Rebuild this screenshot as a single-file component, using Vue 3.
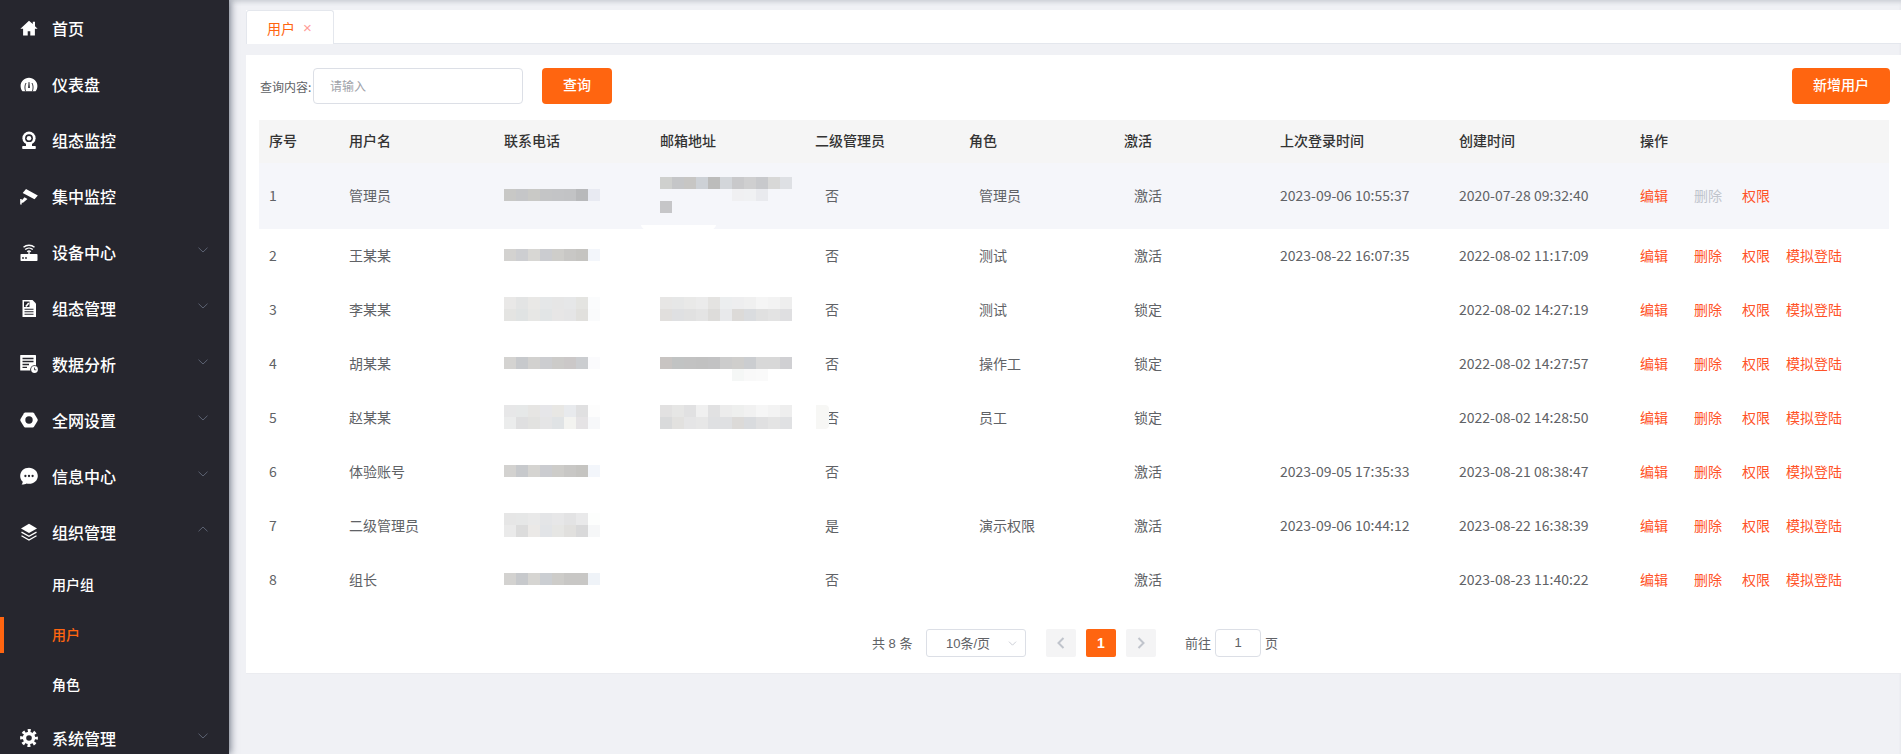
<script setup>
const D = '#26262e'
const menuItems = [
  { label: '首页', icon: `<path d="M9 1.800 .4 9.700h2.700v6.800h4.600v-4.300h2.600v4.300h4.600V9.700h2.700L15 7.200V2.800h-2.200v2.300z" fill="#fff"/>` },
  { label: '仪表盘', icon: `<path d="M9 2.700C4.300 2.700.6 6.400.6 10.900c0 2.100.7 3.800 1.900 5.300h13c1.200-1.500 1.900-3.200 1.900-5.300 0-4.500-3.700-8.200-8.400-8.200z" fill="#fff"/><path d="M5.600 16.300c-1-3-.9-5.800.4-8.300M12.400 16.300c1-3 .9-5.800-.4-8.300" stroke="${D}" stroke-width=".9" fill="none"/><path d="M8.600 7h.8l.5 6H8.100z" fill="${D}"/>` },
  { label: '组态监控', icon: `<circle cx="9" cy="7.200" r="6.600" fill="#fff"/><circle cx="9" cy="7.200" r="3.900" fill="${D}"/><circle cx="9" cy="7.200" r="2.300" fill="#fff"/><path d="M6 13h6v2.500H6z" fill="#fff"/><rect x="2.200" y="15" width="13.600" height="3" rx=".8" fill="#fff"/>` },
  { label: '集中监控', icon: `<path d="M6 2l11.800 6.500-3.300 3.700L2.700 6z" fill="#fff"/><path d="M.2 17.500V12h1.500v1.500l2.800-3.200 3 1.800-4.500 3.700H1.700v1.700z" fill="#fff"/>` },
  { label: '设备中心', arrow: 'down', icon: `<rect x=".5" y="11" width="17" height="7" rx=".8" fill="#fff"/><circle cx="3" cy="15" r=".9" fill="${D}"/><circle cx="6" cy="15" r=".9" fill="${D}"/><path d="M7.200 8.800a2.700 2.700 0 0 1 3.600 0M5.200 6.600a5.600 5.600 0 0 1 7.600 0M3.500 4.300a8.200 8.200 0 0 1 11 0" stroke="#fff" stroke-width="1.400" fill="none"/><path d="M8.300 8.800h1.400V11H8.300z" fill="#fff"/>` },
  { label: '组态管理', arrow: 'down', icon: `<path d="M2.500 1h10l3.500 3.500V18H2.500z" fill="#fff"/><path d="M4 2.500h5.500V8H4z" fill="${D}"/><path d="M5.200 7l3-3.500 1.300 1-3 3.400z" fill="#fff"/><path d="M4.500 10.200h9M4.500 12.700h9M4.500 15.200h9" stroke="${D}" stroke-width="1.100"/>` },
  { label: '数据分析', arrow: 'down', icon: `<rect x=".2" y="0" width="15.800" height="15.500" rx=".6" fill="#fff"/><path d="M2.500 3.500h11M2.500 6.500h11M2.500 9.500h6.500M2.500 12.400h4.500" stroke="${D}" stroke-width="1.400"/><circle cx="14.500" cy="14.500" r="4.300" fill="${D}"/><circle cx="14.500" cy="14.500" r="3.400" fill="#fff"/><path d="M14.500 12.600v2.200h1.800" stroke="${D}" stroke-width=".8" fill="none"/>` },
  { label: '全网设置', arrow: 'down', icon: `<path d="M5.200 1.500h7.600c.5 0 .9.300 1.200.7l3.500 5.900c.3.600.3 1.200 0 1.800L14 15.800c-.3.400-.7.700-1.200.7H5.200c-.5 0-.9-.3-1.200-.7L.5 9.900c-.3-.6-.3-1.200 0-1.800L4 2.200c.3-.4.700-.7 1.200-.7z" fill="#fff"/><circle cx="9" cy="9" r="3.700" fill="${D}"/>` },
  { label: '信息中心', arrow: 'down', icon: `<path d="M9 .8C4 .8.2 4.300.2 8.900c0 2.400 1 4.400 2.600 5.800-.1 1.100-.8 2.300-1.200 2.900 1.600.1 3.800-.5 5-1.100.8.200 1.500.3 2.400.3 5 0 8.800-3.500 8.800-7.900S14 .8 9 .8z" fill="#fff"/><circle cx="5.400" cy="9" r="1.150" fill="${D}"/><circle cx="9" cy="9" r="1.150" fill="${D}"/><circle cx="12.600" cy="9" r="1.150" fill="${D}"/>` },
  { label: '组织管理', arrow: 'up', icon: `<path d="M9 .8l8 4.600-8 4.600-8-4.600z" fill="#fff"/><path d="M1.500 9.100 9 13.300l7.500-4.200M1.500 12.800 9 17l7.500-4.200" stroke="#fff" stroke-width="1.300" fill="none"/>` },
  { label: '用户组', sub: true },
  { label: '用户', sub: true, active: true },
  { label: '角色', sub: true },
  { label: '系统管理', arrow: 'down', icon: `<circle cx="9" cy="9" r="7.200" fill="none" stroke="#fff" stroke-width="3.400" stroke-dasharray="2.900 2.755" stroke-dashoffset="1.450"/><circle cx="9" cy="9" r="6.200" fill="#fff"/><circle cx="9" cy="9" r="2.800" fill="${D}"/>` },
]

const columns = [
  { title: '序号', width: 80 }, { title: '用户名', width: 155 }, { title: '联系电话', width: 156 },
  { title: '邮箱地址', width: 155 }, { title: '二级管理员', width: 154 }, { title: '角色', width: 155 },
  { title: '激活', width: 156 }, { title: '上次登录时间', width: 179 }, { title: '创建时间', width: 181 },
  { title: '操作', width: 259 },
]

const px = (s) => s.split(',').map((c) => (c ? '#' + c : ''))
const rows = [
  { id: 1, name: '管理员', admin: '否', role: '管理员', state: '激活', last: '2023-09-06 10:55:37', created: '2020-07-28 09:32:40', tall: true, locked: true, glow: true,
    phone: px('c8c8c6,c5c6c8,c9c9c6,c4c5c6,c3c4c6,c2c3c5,b8b9bb,e8eaf2'),
    email: px('cfd0ce,c5c6c8,c7c6c4,cdd1d6,bcbcbb,d3d6da,c9c9cb,cfcfd0,c8c9cc,d8d8d7,dee0e4,,,,,,,f0f0f2,f0f1f3,e9eaee,,,c6c6c8') },
  { id: 2, name: '王某某', admin: '否', role: '测试', state: '激活', last: '2023-08-22 16:07:35', created: '2022-08-02 11:17:09',
    phone: px('d3d2d0,cdced1,d8d7d4,cbccd0,cecdca,c8c7c5,c5c4c1,f3f6fb') },
  { id: 3, name: '李某某', admin: '否', role: '测试', state: '锁定', last: '', created: '2022-08-02 14:27:19',
    phone: px('e9e8e7,e3e4e4,e9e8e6,e5e7e8,e6e6e6,e6e7e8,e4e4e1,fbfcfd,e4e4e2,e0e3e3,e7e7e5,e2e5e6,e7e6e6,e5e5e6,e1e0dd,fafbfc'),
    email: px('e7e6e5,e6e7e7,e9e9e8,ebebeb,e4e3e1,eceeef,eeeeef,f0f0f0,f5f5f5,f3f3f3,eeeeee,e1dfdd,dfe0e2,e1e1e1,e4e4e4,dddcda,e8e9eb,dcdad8,dadcdf,e0e0e0,e3e3e3,dfdfe1') },
  { id: 4, name: '胡某某', admin: '否', role: '操作工', state: '锁定', last: '', created: '2022-08-02 14:27:57', faint: px('f5f7f6,f9f9f9,fafafa'),
    phone: px('d4d3d1,c7c9cc,d2d1cf,cccdd0,cccbc9,cbc8c8,cbcdd0,fbfbfd'),
    email: px('c8c4c2,c1c3c3,c2c2c2,c1c1c1,c2c2c3,cccccc,cfcecc,cbcdd0,d8d8d8,d8d8d8,d0d0d3') },
  { id: 5, name: '赵某某', admin: '否', role: '员工', state: '锁定', last: '', created: '2022-08-02 14:28:50', patch: true,
    phone: px('e7e7e8,e6e8e8,e6e5e3,e6e6e9,e8e7e4,e8eaed,e0e0e1,fdfdfd,ebecec,dfdfe0,e2e2e0,e5e5e6,e0e3e5,f3f3f0,e5e3e5,f7f8fa'),
    email: px('e2e1e1,e6e6e5,e1e1e2,f0f0f0,e1e1e2,ececec,eeefee,f1f1f1,f6f6f6,f3f3f3,eeeeee,d9dadb,e2e1df,e5e5e6,e7e7e7,dfe0e2,dfe0e2,dcdad8,d9dbde,e0e0e1,e4e4e4,e0e1e3') },
  { id: 6, name: '体验账号', admin: '否', role: '', state: '激活', last: '2023-09-05 17:35:33', created: '2023-08-21 08:38:47',
    phone: px('d3d2d0,c7c9cc,d5d4d1,cbccd0,cdccc9,c8c7c5,c5c4c1,f3f6fb') },
  { id: 7, name: '二级管理员', admin: '是', role: '演示权限', state: '激活', last: '2023-09-06 10:44:12', created: '2023-08-22 16:38:39',
    phone: px('e6e6e6,e6e7e7,e9e9e9,e4e5e7,e7e7e8,e3e3e4,e9e9ea,fdfefd,eaeaea,dcdcdc,ebe9e7,e2e4e7,e6e6e4,e1e0de,d9d9da,f6f7f8') },
  { id: 8, name: '组长', admin: '否', role: '', state: '激活', last: '', created: '2023-08-23 11:40:22',
    phone: px('d3d2d0,c7c9cc,d6d5d2,cbced2,cdccc9,c8c7c5,c8c7c5,eff3f8') },
]
</script>

<template>
  <div class="app">
    <aside class="sidebar">
      <div
        v-for="item in menuItems"
        :key="item.label"
        class="menu-item"
        :class="{ sub: item.sub, active: item.active }"
      >
        <svg v-if="item.icon" class="menu-icon" viewBox="0 0 18 18" v-html="item.icon"></svg>
        <span class="menu-label">{{ item.label }}</span>
        <svg v-if="item.arrow" class="menu-arrow" :class="item.arrow" viewBox="0 0 10 6">
          <path d="M.5.7 5 5 9.500.7" />
        </svg>
      </div>
    </aside>

    <main class="main">
      <div class="tabs">
        <div class="tab">
          <span>用户</span>
          <span class="tab-close">×</span>
        </div>
      </div>

      <section class="card">
        <div class="toolbar">
          <label class="query-label">查询内容:</label>
          <div class="query-input">请输入</div>
          <button class="btn query-btn">查询</button>
          <button class="btn add-btn">新增用户</button>
        </div>

        <table class="table">
          <colgroup>
            <col v-for="c in columns" :key="c.title" :width="c.width" />
          </colgroup>
          <thead>
            <tr>
              <th v-for="c in columns" :key="c.title">{{ c.title }}</th>
            </tr>
          </thead>
          <tbody>
            <tr v-for="r in rows" :key="r.id" :class="{ tall: r.tall }">
              <td>{{ r.id }}</td>
              <td>{{ r.name }}</td>
              <td>
                <div class="mosaic">
                  <i v-for="(c, i) in r.phone" :key="i" :style="{ background: c }"></i>
                </div>
              </td>
              <td class="email-cell">
                <div v-if="r.email" class="mosaic">
                  <i v-for="(c, i) in r.email" :key="i" :style="{ background: c }"></i>
                  <div v-if="r.faint" class="mosaic faint">
                    <i v-for="(c, i) in r.faint" :key="i" :style="{ background: c }"></i>
                  </div>
                </div>
                <div v-if="r.glow" class="glow"></div>
              </td>
              <td class="indent">
                {{ r.admin }}
                <div v-if="r.patch" class="patch"></div>
              </td>
              <td class="indent">{{ r.role }}</td>
              <td class="indent">{{ r.state }}</td>
              <td>{{ r.last }}</td>
              <td>{{ r.created }}</td>
              <td class="actions">
                <a class="edit">编辑</a>
                <a class="del" :class="{ disabled: r.locked }">删除</a>
                <a class="perm">权限</a>
                <a v-if="!r.locked">模拟登陆</a>
              </td>
            </tr>
          </tbody>
        </table>

        <div class="pager">
          <span class="total">共 8 条</span>
          <div class="size">
            <span>10条/页</span>
            <svg viewBox="0 0 10 6"><path d="M.8.8 5 5 9.200.8" /></svg>
          </div>
          <button class="page-btn prev">
            <svg viewBox="0 0 8 12"><path d="M6.500 1 1.500 6l5 5" /></svg>
          </button>
          <button class="page-btn current">1</button>
          <button class="page-btn next">
            <svg viewBox="0 0 8 12"><path d="M1.500 1l5 5-5 5" /></svg>
          </button>
          <span class="goto">前往</span>
          <div class="page-input">1</div>
          <span class="goto-end">页</span>
        </div>
      </section>
    </main>
  </div>
</template>

<style>
html, body { margin: 0; height: 100%; overflow: hidden; background: #f0f1f5; }
</style>

<style scoped>
.app {
  display: flex;
  height: 754px;
  overflow: hidden;
  font-family: "Noto Sans CJK SC", "Noto Sans", sans-serif;
  font-size: 14px;
  color: #606266;
}

/* Sidebar */
.sidebar {
  position: relative;
  z-index: 2;
  flex: 0 0 229px;
  width: 229px;
  height: 754px;
  overflow: hidden;
  background: #26262e;
  box-shadow: 2px 0 7px rgba(40, 50, 70, 0.55);
}
.menu-item {
  position: relative;
  display: flex;
  align-items: center;
  height: 56px;
  padding-left: 20px;
  color: #fff;
  font-size: 16px;
  font-weight: 500;
}
.menu-icon { flex: 0 0 18px; width: 18px; height: 18px; margin-right: 14px; }
.menu-arrow {
  position: absolute;
  right: 21px;
  top: 23px;
  width: 10px;
  height: 6px;
  fill: none;
  stroke: #5c6272;
  stroke-width: 1;
}
.menu-arrow.up { transform: rotate(180deg); top: 22px; }
.menu-item.sub {
  box-sizing: border-box;
  height: 50px;
  padding-left: 52px;
  padding-bottom: 2px;
  font-size: 14px;
}
.menu-item.active { color: #ff6510; }
.menu-item.active::before {
  content: "";
  position: absolute;
  left: 0;
  top: 7px;
  width: 4px;
  height: 36px;
  background: #ff6510;
}

/* Main */
.main {
  flex: 1;
  min-width: 0;
  padding: 10px 0 0 17px;
  box-shadow: inset 0 4px 4px -2px rgba(70, 80, 100, 0.22);
}
.tabs {
  height: 33px;
  background: #fff;
  border-bottom: 1px solid #e4e7ed;
}
.tab {
  display: flex;
  align-items: center;
  box-sizing: border-box;
  width: 88px;
  height: 34px;
  padding-left: 20px;
  background: #fff;
  border: 1px solid #e4e7ed;
  border-bottom: none;
  border-radius: 3px 3px 0 0;
  color: #ff6510;
  font-size: 14px;
}
.tab-close { margin-left: 8px; font-size: 15px; color: #ff9d96; font-family: "Liberation Sans", sans-serif; }

.card {
  box-sizing: border-box;
  height: 619px;
  margin-top: 11px;
  padding: 13px 11px 0 13px;
  background: #fff;
  border-bottom: 1px solid #ebecf0;
}

/* Toolbar */
.toolbar { display: flex; align-items: center; height: 36px; margin-bottom: 16px; }
.query-label { width: 53px; padding-left: 1px; font-size: 12px; color: #606266; }
.query-input {
  box-sizing: border-box;
  width: 210px;
  height: 36px;
  margin-right: 19px;
  padding-left: 16px;
  line-height: 34px;
  border: 1px solid #dcdfe6;
  border-radius: 4px;
  font-size: 12px;
  color: #a0a2a8;
}
.btn {
  box-sizing: border-box;
  height: 36px;
  padding: 0 0 4px;
  border: none;
  border-radius: 4px;
  background: #ff6510;
  color: #fff;
  font-family: inherit;
  font-size: 14px;
  font-weight: 500;
}
.query-btn { width: 70px; }
.add-btn { width: 98px; margin-left: auto; }

/* Table */
.table { width: 1630px; table-layout: fixed; border-collapse: collapse; }
th {
  box-sizing: border-box;
  height: 43px;
  padding: 0 10px 4px;
  background: #f5f5f5;
  color: #333;
  font-size: 14px;
  font-weight: 500;
  text-align: left;
}
td {
  position: relative;
  box-sizing: border-box;
  height: 54px;
  padding: 0 10px 2px;
  color: #606266;
  font-size: 14px;
}
.tall td { height: 66px; background: #f5f6fa; }
td.indent { padding-left: 20px; }

.mosaic {
  display: grid;
  grid-template-columns: repeat(auto-fill, 12px);
  grid-auto-rows: 12px;
  width: 96px;
  position: relative;
}
.email-cell .mosaic { width: 132px; }
.mosaic i { display: block; }
.mosaic.faint {
  position: absolute;
  left: 72px;
  top: 12px;
  width: 36px;
}
.glow {
  position: absolute;
  left: -9px;
  top: 62px;
  width: 75px;
  height: 11px;
  background: #fff;
  border-radius: 0 0 50% 50% / 0 0 100% 100%;
}
.patch {
  position: absolute;
  left: 11px;
  top: 14px;
  width: 13px;
  height: 24px;
  background: #f7f7f5;
  border-radius: 0 4px 4px 0;
}

.actions a { color: #ff5228; }
.actions .edit { margin-right: 26px; }
.actions .del { margin-right: 20px; }
.actions .perm { margin-right: 16px; }
.actions .disabled { color: #c0c4cc; }

/* Pagination */
.pager {
  display: flex;
  align-items: center;
  justify-content: center;
  height: 28px;
  margin-top: 22px;
  margin-right: -1px;
  font-family: "Liberation Sans", "Noto Sans CJK SC", sans-serif;
  font-size: 13px;
  color: #606266;
}
.total { width: 54px; padding-bottom: 2px; }
.size {
  display: flex;
  align-items: center;
  box-sizing: border-box;
  width: 100px;
  height: 28px;
  margin-right: 20px;
  padding-left: 19px;
  border: 1px solid #dcdfe6;
  border-radius: 3px;
}
.size span { width: 62px; padding-bottom: 2px; }
.size svg { width: 9px; height: 5px; fill: none; stroke: #c0c4cc; stroke-width: 1; }
.page-btn {
  display: flex;
  align-items: center;
  justify-content: center;
  width: 30px;
  height: 28px;
  padding: 0;
  border: none;
  border-radius: 2px;
  background: #f4f4f5;
  font-family: inherit;
  font-size: 14px;
  font-weight: 700;
}
.page-btn svg { width: 8px; height: 12px; fill: none; stroke: #c0c4cc; stroke-width: 2; }
.page-btn.current { margin: 0 10px; background: #ff6510; color: #fff; }
.goto { margin-left: 29px; margin-right: 4px; padding-bottom: 2px; }
.page-input {
  box-sizing: border-box;
  width: 46px;
  height: 28px;
  line-height: 26px;
  text-align: center;
  border: 1px solid #dcdfe6;
  border-radius: 4px;
}
.goto-end { margin-left: 4px; padding-bottom: 2px; }
</style>
